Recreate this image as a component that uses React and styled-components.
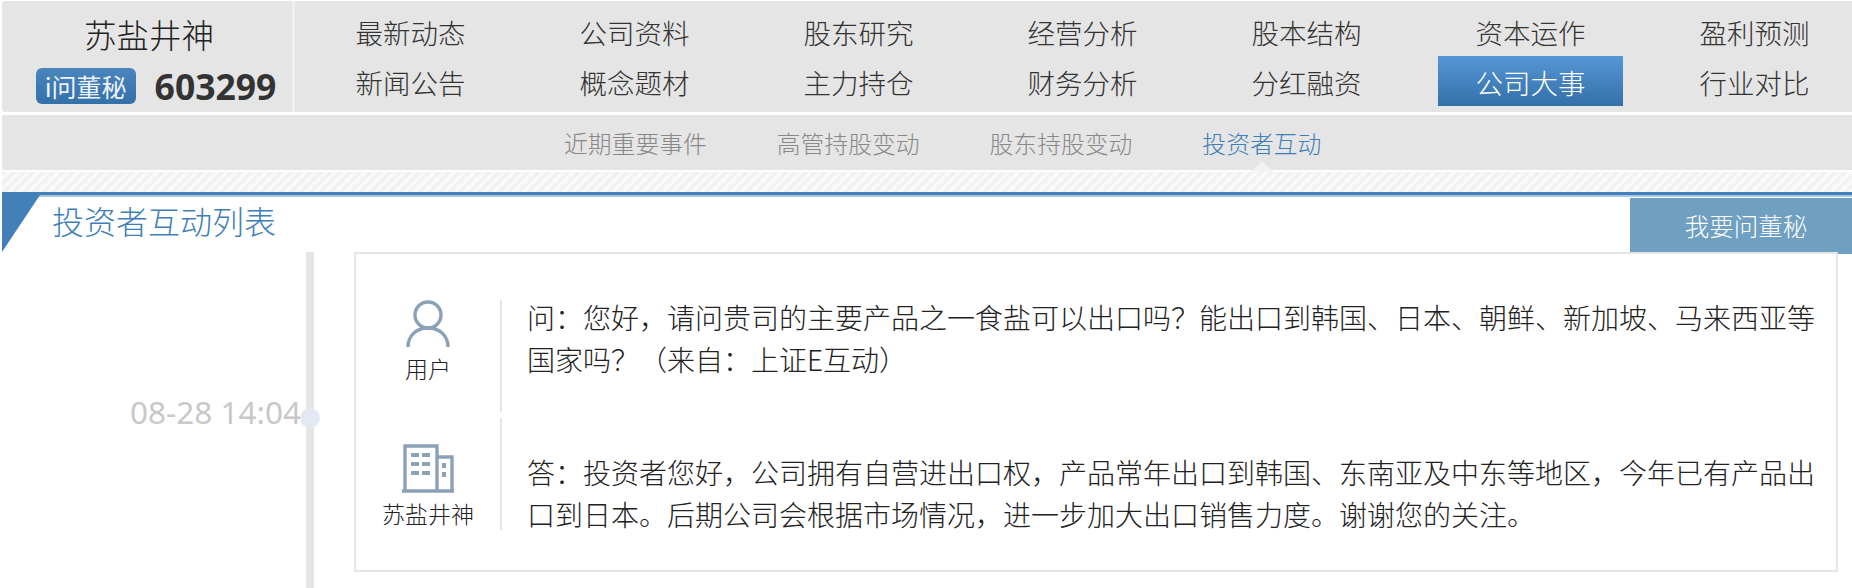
import React from 'react';
import styled, { createGlobalStyle } from 'styled-components';

const GlobalStyle = createGlobalStyle`
  html, body {
    margin: 0;
    padding: 0;
    background: #fff;
    height: 588px;
    overflow: hidden;
  }
  body {
    font-family: "Noto Sans CJK SC", "Noto Sans", sans-serif;
    color: #333;
  }
`;

const Page = styled.div`
  width: 1852px;
  padding: 1px 0 0 2px;
  box-sizing: border-box;
`;

const TopBar = styled.div`
  display: flex;
  height: 111px;
  background: #e5e5e5;
  border-radius: 3px 0 0 3px;
`;

const Brand = styled.div`
  width: 293px;
  flex-shrink: 0;
  padding-left: 18px;
  box-sizing: border-box;
  border-right: 3px solid #f0f0f0;
  display: flex;
  flex-direction: column;
  align-items: center;
`;

const BrandName = styled.div`
  font-size: 32.5px;
  line-height: 40px;
  font-weight: 300;
  margin-top: 13px;
  margin-left: -14px;
  color: #222;
`;

const BrandRow = styled.div`
  display: flex;
  align-items: center;
  gap: 19px;
  margin-top: 14px;
`;

const Badge = styled.div`
  width: 100px;
  height: 36px;
  border-radius: 6px;
  background: linear-gradient(#4a85bd, #3470a9);
  color: #eef4fa;
  font-size: 25px;
  line-height: 36px;
  text-align: center;
  white-space: nowrap;
`;

const Code = styled.div`
  font-family: "Noto Sans", sans-serif;
  font-size: 35.5px;
  line-height: 36px;
  font-weight: 700;
  color: #333;
`;

const Nav = styled.div`
  display: grid;
  grid-template-columns: repeat(7, 185px);
  grid-auto-rows: 50px;
  column-gap: 39px;
  padding: 5px 0 0 23px;
`;

const NavItem = styled.div`
  text-align: center;
  font-size: 27.5px;
  font-weight: 300;
  line-height: 52px;
  white-space: nowrap;
  color: ${(props) => (props.$active ? '#fff' : '#333')};
  background: ${(props) =>
    props.$active ? 'linear-gradient(#5596d6, #3470a9)' : 'transparent'};
`;

const SubBar = styled.div`
  position: relative;
  display: flex;
  justify-content: flex-start;
  gap: 70px;
  height: 55px;
  margin-top: 3px;
  padding-left: 562px;
  background: #e5e5e5;
  border-radius: 0 0 0 3px;
  box-sizing: border-box;
`;

const SubItem = styled.div`
  position: relative;
  font-size: 23.8px;
  font-weight: 300;
  line-height: 55px;
  white-space: nowrap;
  color: ${(props) => (props.$active ? '#3f7fb9' : '#888')};

  ${(props) =>
    props.$active &&
    `
    &::after {
      content: '';
      position: absolute;
      left: 50%;
      bottom: -2px;
      margin-left: -11px;
      border-left: 11px solid transparent;
      border-right: 11px solid transparent;
      border-bottom: 11px solid #f3f3f3;
    }
  `}
`;

const HatchBand = styled.div`
  height: 20px;
  margin-top: 2px;
  background: repeating-linear-gradient(
    135deg,
    #f1f1f1 0 3px,
    #f9f9f9 3px 7px
  );
`;

const Panel = styled.div`
  position: relative;
  border-top: 3px solid #437fb9;
  box-shadow: inset 0 2px 0 #a9c6e0;
`;

const Corner = styled.div`
  position: absolute;
  left: 0;
  top: 0;
  width: 38px;
  height: 57px;
  background: #437fb9;
  clip-path: polygon(0 0, 100% 0, 0 100%);
`;

const TitleRow = styled.div`
  display: flex;
  justify-content: space-between;
  height: 57px;
`;

const Title = styled.h1`
  margin: 0;
  padding: 0 0 0 50px;
  font-size: 32px;
  font-weight: 300;
  line-height: 50px;
  color: #3f7fb9;
`;

const AskButton = styled.div`
  width: 222px;
  height: 56px;
  margin-top: 3px;
  padding-left: 10px;
  box-sizing: border-box;
  background: #6fa0c2;
  color: #fff;
  font-size: 24.5px;
  font-weight: 300;
  line-height: 56px;
  text-align: center;
`;

const Item = styled.div`
  display: flex;
`;

const TimeCol = styled.div`
  width: 299px;
  flex-shrink: 0;
  padding-top: 138px;
  text-align: right;
  font-family: "Noto Sans", sans-serif;
  font-size: 31.5px;
  line-height: 44px;
  white-space: nowrap;
  color: #c8c8c8;
`;

const Rail = styled.div`
  position: relative;
  width: 8px;
  margin-left: 5px;
  background: #e5e5e5;
  flex-shrink: 0;
`;

const Dot = styled.div`
  position: absolute;
  left: -6px;
  top: 156px;
  width: 20px;
  height: 20px;
  border-radius: 50%;
  background: #e3e8f3;
`;

const Card = styled.div`
  width: 1484px;
  height: 320px;
  margin: 0 0 20px 40px;
  padding: 46px 20px 0 0;
  border: 2px solid #e5e5e5;
  box-sizing: border-box;
  display: flex;
  flex-direction: column;
  gap: 6px;
`;

const Row = styled.div`
  display: flex;
  height: 112px;
`;

const Who = styled.div`
  width: 144px;
  flex-shrink: 0;
  display: flex;
  flex-direction: column;
  align-items: center;
  justify-content: ${(props) => (props.$answer ? 'flex-end' : 'flex-start')};
  padding-bottom: ${(props) => (props.$answer ? '2px' : '0')};
  box-sizing: border-box;
`;

const WhoLabel = styled.div`
  font-size: 23px;
  font-weight: 300;
  line-height: 30px;
  margin-top: 5px;
  color: #222;
  white-space: nowrap;
`;

const Message = styled.div`
  flex: 1;
  display: flex;
  align-items: ${(props) => (props.$answer ? 'flex-end' : 'flex-start')};
  border-left: 2px solid #e5e5e5;
  padding-left: 25px;
`;

const MessageText = styled.div`
  font-size: 28px;
  font-weight: 300;
  line-height: 42px;
  color: #222;
  margin: ${(props) => (props.$answer ? '0 0 -5px' : '-4px 0 0')};
`;

const UserIcon = () => (
  <svg width="44" height="48" viewBox="0 0 44 48" fill="none" stroke="#8ba1b7" strokeWidth="3.4">
    <circle cx="22" cy="15" r="13" />
    <path d="M2 47c0-11 8-19 20-19s20 8 20 19" />
  </svg>
);

const BuildingIcon = () => (
  <svg width="54" height="50" viewBox="0 0 54 50" fill="none" stroke="#8ba1b7" strokeWidth="3.4">
    <path d="M4 48V3h32v45M36 14h15v34M1 48h52" />
    <g fill="#8ba1b7" stroke="none">
      <rect x="10" y="10" width="8" height="4" />
      <rect x="21" y="10" width="8" height="4" />
      <rect x="10" y="19" width="8" height="4" />
      <rect x="21" y="19" width="8" height="4" />
      <rect x="10" y="28" width="8" height="4" />
      <rect x="21" y="28" width="8" height="4" />
      <rect x="41" y="20" width="4" height="5" />
      <rect x="41" y="29" width="4" height="5" />
    </g>
  </svg>
);

const navItems = [
  '最新动态', '公司资料', '股东研究', '经营分析', '股本结构', '资本运作', '盈利预测',
  '新闻公告', '概念题材', '主力持仓', '财务分析', '分红融资', '公司大事', '行业对比',
];

const subItems = ['近期重要事件', '高管持股变动', '股东持股变动', '投资者互动'];

export default function App() {
  return (
    <Page>
      <GlobalStyle />
      <TopBar>
        <Brand>
          <BrandName>苏盐井神</BrandName>
          <BrandRow>
            <Badge>i问董秘</Badge>
            <Code>603299</Code>
          </BrandRow>
        </Brand>
        <Nav>
          {navItems.map((name) => (
            <NavItem key={name} $active={name === '公司大事'}>{name}</NavItem>
          ))}
        </Nav>
      </TopBar>
      <SubBar>
        {subItems.map((name) => (
          <SubItem key={name} $active={name === '投资者互动'}>{name}</SubItem>
        ))}
      </SubBar>
      <HatchBand />
      <Panel>
        <Corner />
        <TitleRow>
          <Title>投资者互动列表</Title>
          <AskButton>我要问董秘</AskButton>
        </TitleRow>
        <Item>
          <TimeCol>08-28 14:04</TimeCol>
          <Rail><Dot /></Rail>
          <Card>
            <Row>
              <Who>
                <UserIcon />
                <WhoLabel>用户</WhoLabel>
              </Who>
              <Message>
                <MessageText>
                  问：您好，请问贵司的主要产品之一食盐可以出口吗？能出口到韩国、日本、朝鲜、新加坡、马来西亚等国家吗？（来自：上证E互动）
                </MessageText>
              </Message>
            </Row>
            <Row>
              <Who $answer>
                <BuildingIcon />
                <WhoLabel>苏盐井神</WhoLabel>
              </Who>
              <Message $answer>
                <MessageText $answer>
                  答：投资者您好，公司拥有自营进出口权，产品常年出口到韩国、东南亚及中东等地区，今年已有产品出口到日本。后期公司会根据市场情况，进一步加大出口销售力度。谢谢您的关注。
                </MessageText>
              </Message>
            </Row>
          </Card>
        </Item>
      </Panel>
    </Page>
  );
}
